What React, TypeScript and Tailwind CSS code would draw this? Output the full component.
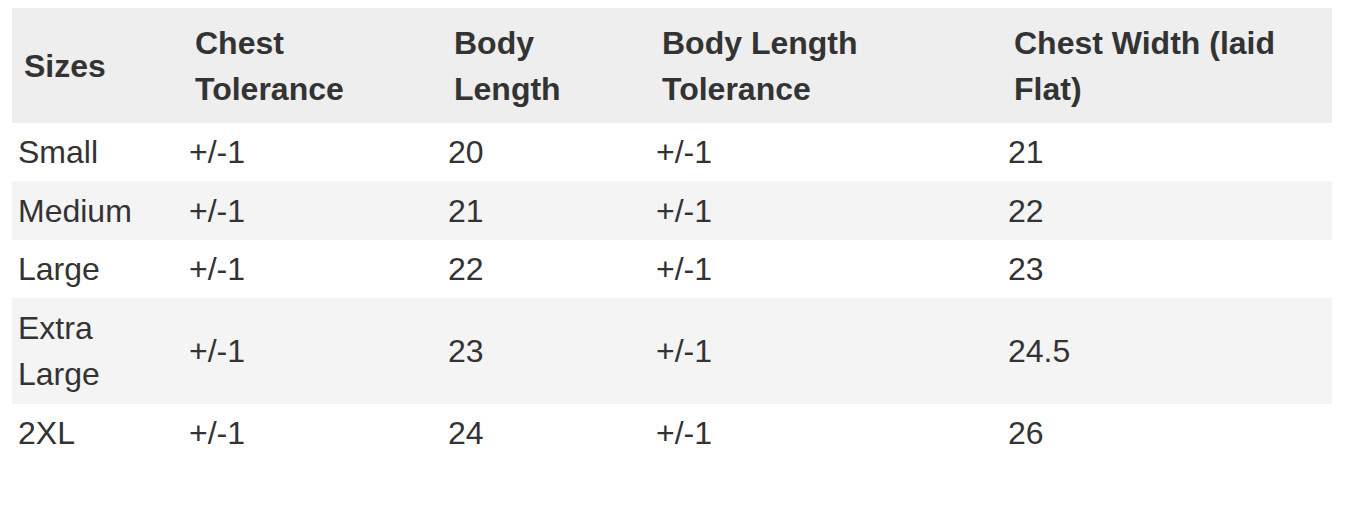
export default function App() {
  const rows = [
    ["Small", "+/-1", "20", "+/-1", "21"],
    ["Medium", "+/-1", "21", "+/-1", "22"],
    ["Large", "+/-1", "22", "+/-1", "23"],
    ["Extra Large", "+/-1", "23", "+/-1", "24.5"],
    ["2XL", "+/-1", "24", "+/-1", "26"],
  ];
  const heights = ["h-[58px]", "h-[59px]", "h-[58px]", "h-[106px]", "h-[58px]"];
  const headers = ["Sizes", "Chest Tolerance", "Body Length", "Body Length Tolerance", "Chest Width (laid Flat)"];
  return (
    <div className="w-[1348px] h-[512px] bg-white pt-[8px] pl-[12px]" style={{ fontFamily: '"Liberation Sans", Arial, sans-serif' }}>
      <table className="table-fixed w-[1320px] border-collapse text-[32px] leading-[46px] text-[#333333]">
        <colgroup>
          <col className="w-[171px]" />
          <col className="w-[259px]" />
          <col className="w-[208px]" />
          <col className="w-[352px]" />
          <col className="w-[330px]" />
        </colgroup>
        <thead>
          <tr className="bg-[#eeeeee] h-[115px]">
            {headers.map((h, i) => (
              <th key={i} className="text-left align-middle font-bold pl-[12px] pr-[12px] py-0">
                {h}
              </th>
            ))}
          </tr>
        </thead>
        <tbody>
          {rows.map((r, ri) => (
            <tr key={ri} className={`${ri % 2 === 1 ? "bg-[#f4f4f4]" : "bg-white"} ${heights[ri]}`}>
              {r.map((c, ci) => (
                <td key={ci} className="align-middle pl-[6px] pr-[6px] py-0 font-normal">
                  {ci === 0 && c === "Extra Large" ? (
                    <>
                      Extra
                      <br />
                      Large
                    </>
                  ) : (
                    c
                  )}
                </td>
              ))}
            </tr>
          ))}
        </tbody>
      </table>
    </div>
  );
}
